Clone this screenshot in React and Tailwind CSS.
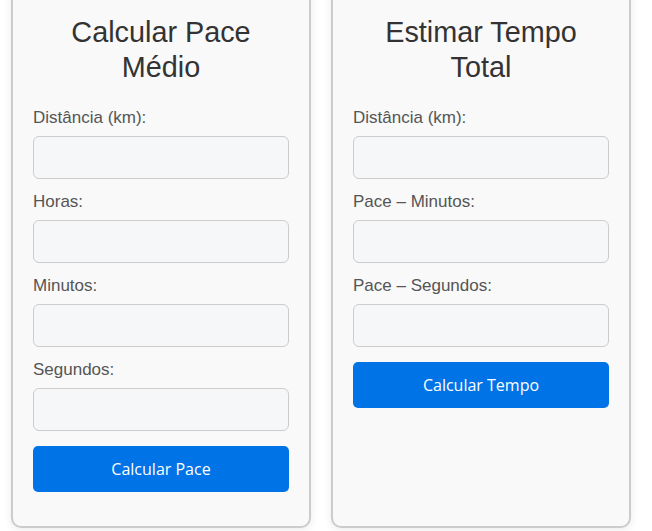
export default function App() {
  const Field = ({ label }) => (
    <div className="flex flex-col mb-[13px]">
      <label className="text-[17px] leading-[20px] text-[#555] mb-[8px]">{label}</label>
      <input
        type="text"
        className="w-full h-[43px] rounded-[6px] border border-[#ccc] bg-[#f6f7f9] px-3 outline-none"
      />
    </div>
  );

  const Card = ({ title, fields, button }) => (
    <div className="w-[300px] rounded-[10px] border-2 border-[#ccc] bg-[#f9f9f9] shadow-[0_2px_10px_rgba(0,0,0,0.08)] px-[20px] pt-[53px] pb-[34px]">
      <h2 className="text-center text-[28.8px] leading-[34.5px] text-[#333] mb-[24px] px-[20px]">
        {title}
      </h2>
      {fields.map((f) => (
        <Field key={f} label={f} />
      ))}
      <button className="mt-[2px] w-full h-[46px] rounded-[5px] bg-[#0073e6] text-white text-[16px] font-['Open_Sans',sans-serif]">
        {button}
      </button>
    </div>
  );

  return (
    <div className="min-h-[531px] bg-white font-['Liberation_Sans',Arial,sans-serif] overflow-hidden">
      <div className="flex items-stretch gap-[20px] pl-[11px] -mt-[40px]">
        <Card
          title={<>Calcular Pace<br />Médio</>}
          fields={["Distância (km):", "Horas:", "Minutos:", "Segundos:"]}
          button="Calcular Pace"
        />
        <Card
          title={<>Estimar Tempo<br />Total</>}
          fields={["Distância (km):", "Pace – Minutos:", "Pace – Segundos:"]}
          button="Calcular Tempo"
        />
      </div>
    </div>
  );
}
